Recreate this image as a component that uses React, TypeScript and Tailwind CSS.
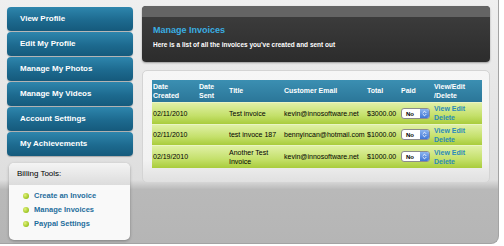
import { ChevronsUpDown } from 'lucide-react'

const menu = [
  'View Profile',
  'Edit My Profile',
  'Manage My Photos',
  'Manage My Videos',
  'Account Settings',
  'My Achievements',
]

const tools = ['Create an Invoice', 'Manage Invoices', 'Paypal Settings']

const invoices = [
  { created: '02/11/2010', title: 'Test invoice', email: 'kevin@innosoftware.net', total: '$3000.00' },
  { created: '02/11/2010', title: 'test invoce 187', email: 'bennyincan@hotmail.com', total: '$1000.00' },
  { created: '02/19/2010', title: 'Another Test Invoice', email: 'kevin@innosoftware.net', total: '$1000.00' },
]

function PaidSelect() {
  return (
    <div className="flex h-[11px] w-[29px] overflow-hidden rounded-[3px] border border-[#8c8c8c] bg-white">
      <span className="flex-1 pl-[4px] text-[6px] font-bold leading-[10px] text-black">No</span>
      <span className="flex w-[9px] items-center justify-center bg-[linear-gradient(to_bottom,#8cb4f0,#3f76d6)] text-white">
        <ChevronsUpDown className="h-[7px] w-[7px]" strokeWidth={3} />
      </span>
    </div>
  )
}

export default function App() {
  return (
    <div className="h-[246px] w-[504px] bg-white font-['Liberation_Sans',Arial,sans-serif]">
      <div className="flex h-[244px] w-[499px] gap-[9px] rounded-br-[8px] border-r border-b border-[#a3a3a3] bg-[linear-gradient(to_bottom,#efefef,#dedede_74%,#b9b9b9_78%,#b5b5b5)] pt-[6px] pl-[7px]">
        <div className="flex w-[126px] flex-col pt-[1px]">
          <div className="flex flex-col gap-[1px]">
            {menu.map((item) => (
              <div
                key={item}
                className="flex h-[24px] items-center rounded-[4px] bg-[linear-gradient(to_bottom,#2e86ad,#1d6a8f_55%,#155a7c)] pl-[13px] text-[8px] font-bold text-white shadow-[0_1px_1px_rgba(0,0,0,0.25)]"
              >
                {item}
              </div>
            ))}
          </div>

          <div className="mt-[7px] ml-[2px] h-[77px] w-[121px] overflow-hidden rounded-[5px] bg-[#f9f9f9] shadow-[0_1px_3px_rgba(0,0,0,0.3)]">
            <div className="flex h-[22px] items-center bg-[linear-gradient(to_bottom,#f4f4f4,#dcdcdc)] pl-[8px] text-[8px] text-black">
              Billing Tools:
            </div>
            <div className="flex flex-col gap-[4px] pt-[6px] pl-[14px]">
              {tools.map((t) => (
                <div key={t} className="flex h-[10px] items-center gap-[5px]">
                  <span className="h-[6px] w-[6px] rounded-full bg-[radial-gradient(circle_at_35%_35%,#e2f27a,#9cc423_70%,#7aa016)]" />
                  <span className="text-[7.5px] font-bold text-[#1f6e9c]">{t}</span>
                </div>
              ))}
            </div>
          </div>
        </div>

        <div className="flex w-[348px] flex-col">
          <div className="h-[56px] overflow-hidden rounded-[4px] bg-[linear-gradient(to_bottom,#3f3f3f,#2c2c2c)] shadow-[0_1px_2px_rgba(0,0,0,0.35)]">
            <div className="h-[11px] bg-[#646464]" />
            <div className="pt-[7px] pl-[11px]">
              <div className="text-[9px] font-bold leading-[12px] text-[#3aaee2]">Manage Invoices</div>
              <div className="mt-[4px] text-[6.5px] font-bold text-white">
                Here is a list of all the invoices you've created and sent out
              </div>
            </div>
          </div>

          <div className="mt-[8px] h-[113px] rounded-[5px] border border-[#d4d4d4] bg-[linear-gradient(to_bottom,#f6f6f6,#f2f2f2_80%,#e0e0e0)] pt-[9px] pl-[9px]">
            <table className="w-[330px] table-fixed border-collapse text-left text-[7px] text-black">
              <colgroup>
                <col className="w-[46px]" />
                <col className="w-[30px]" />
                <col className="w-[55px]" />
                <col className="w-[83px]" />
                <col className="w-[34px]" />
                <col className="w-[33px]" />
                <col className="w-[49px]" />
              </colgroup>
              <thead>
                <tr className="h-[22px] bg-[linear-gradient(to_bottom,#3b8fb2,#2b7698)] font-bold leading-[9px] text-white">
                  <th className="pl-[1px]">Date<br />Created</th>
                  <th className="pl-[1px]">Date<br />Sent</th>
                  <th className="pl-[1px]">Title</th>
                  <th className="pl-[1px]">Customer Email</th>
                  <th className="pl-[1px]">Total</th>
                  <th className="pl-[1px]">Paid</th>
                  <th className="pl-[1px]">View/Edit<br />/Delete</th>
                </tr>
              </thead>
              <tbody>
                {invoices.map((inv, i) => (
                  <tr
                    key={i}
                    className={`${i === 2 ? 'h-[23px]' : i === 1 ? 'h-[21px]' : 'h-[22px]'} border-t border-[#eaf5c4] bg-[linear-gradient(to_bottom,#e0f0a6,#c4e06a_60%,#a9cc3c)] leading-[9px]`}
                  >
                    <td className="pl-[1px]">{inv.created}</td>
                    <td />
                    <td className="pl-[1px]">{inv.title}</td>
                    <td className="pl-[1px]">{inv.email}</td>
                    <td className="pl-[1px]">{inv.total}</td>
                    <td className="pl-[1px]"><PaidSelect /></td>
                    <td className="pl-[1px] font-bold text-[#2a8ab8]">View Edit<br />Delete</td>
                  </tr>
                ))}
              </tbody>
            </table>
          </div>
        </div>
      </div>
    </div>
  )
}
